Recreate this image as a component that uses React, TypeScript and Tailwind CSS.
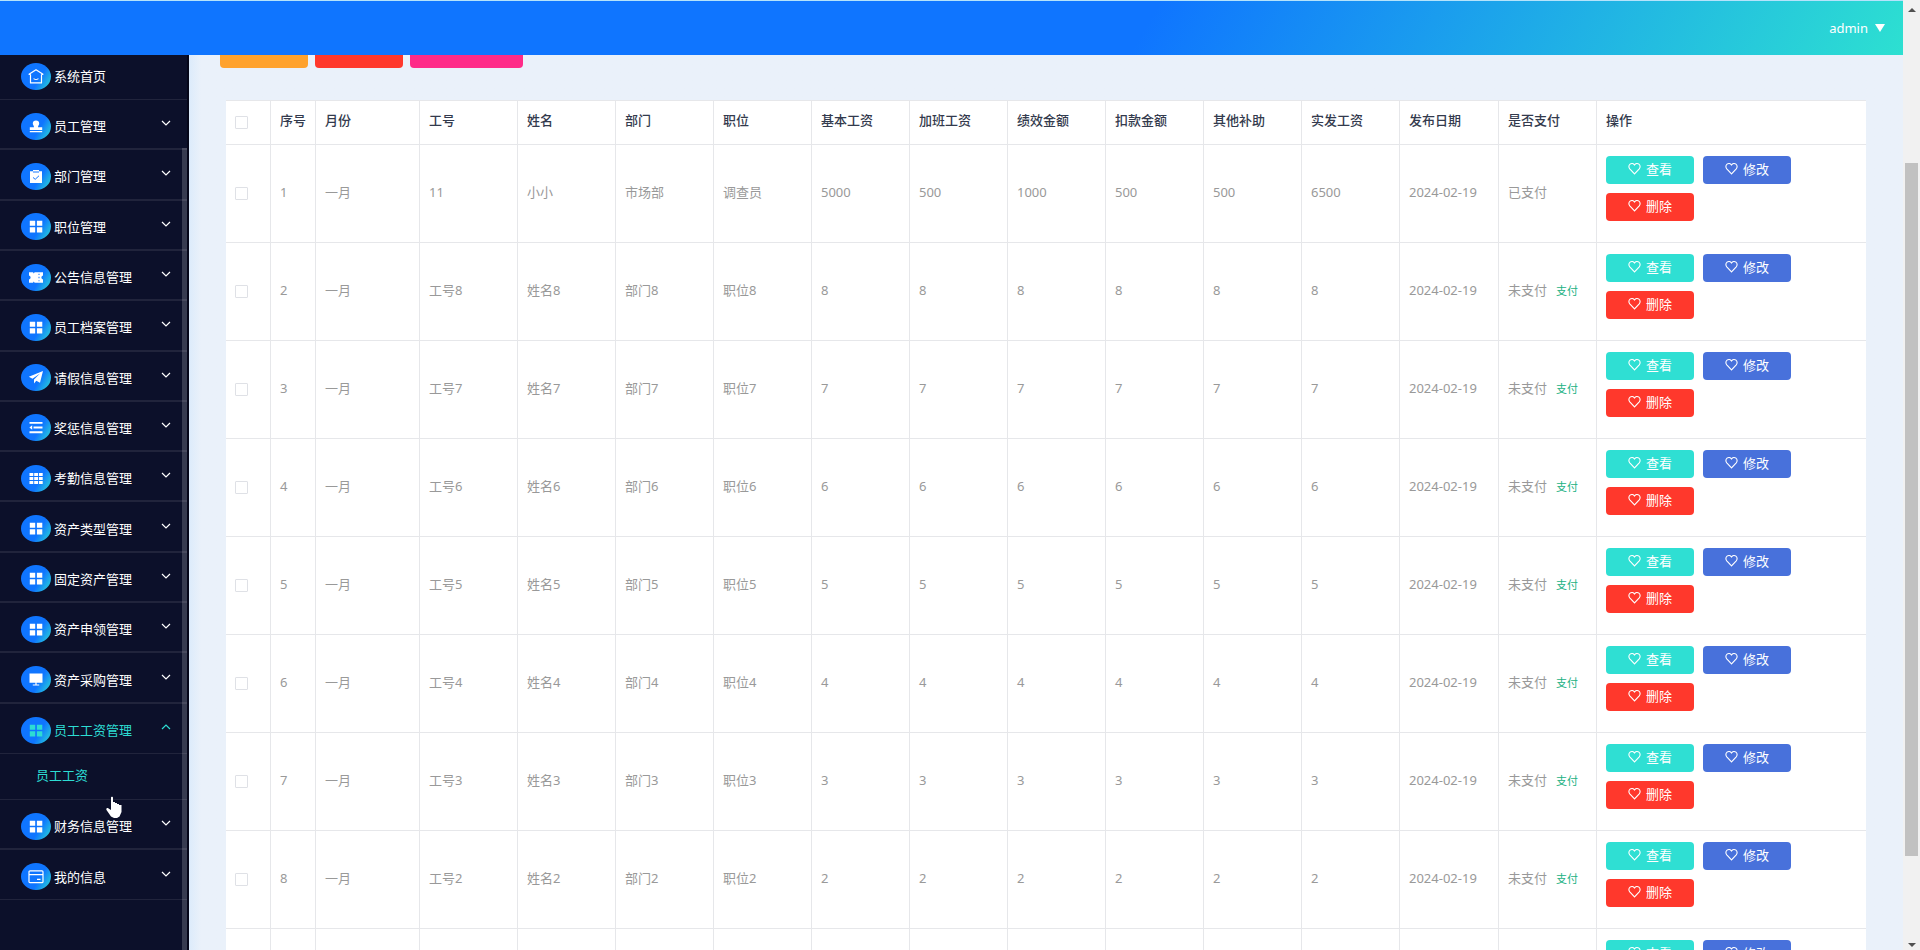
import { useState } from "react";
import type { ReactNode } from "react";

interface MenuItem {
  title: string;
  icon: string;
  open?: boolean;
}

interface Salary {
  month: string;
  no: string;
  name: string;
  dept: string;
  post: string;
  amounts: string[];
  date: string;
  paid: boolean;
}

const mainMenu: MenuItem[] = [
  { title: "员工管理", icon: "user" },
  { title: "部门管理", icon: "claim" },
  { title: "职位管理", icon: "menu" },
  { title: "公告信息管理", icon: "ticket" },
  { title: "员工档案管理", icon: "menu" },
  { title: "请假信息管理", icon: "send" },
  { title: "奖惩信息管理", icon: "unfold" },
  { title: "考勤信息管理", icon: "grid" },
  { title: "资产类型管理", icon: "menu" },
  { title: "固定资产管理", icon: "menu" },
  { title: "资产申领管理", icon: "menu" },
  { title: "资产采购管理", icon: "screen" },
  { title: "员工工资管理", icon: "menu", open: true },
];

const bottomMenu: MenuItem[] = [
  { title: "财务信息管理", icon: "menu" },
  { title: "我的信息", icon: "card" },
];

const headers = [
  "序号", "月份", "工号", "姓名", "部门", "职位", "基本工资", "加班工资", "绩效金额",
  "扣款金额", "其他补助", "实发工资", "发布日期", "是否支付", "操作",
];

const rows: Salary[] = [
  {
    month: "一月",
    no: "11",
    name: "小小",
    dept: "市场部",
    post: "调查员",
    amounts: ["5000", "500", "1000", "500", "500", "6500"],
    date: "2024-02-19",
    paid: true,
  },
  ...[8, 7, 6, 5, 4, 3, 2, 1].map((n) => ({
    month: "一月",
    no: `工号${n}`,
    name: `姓名${n}`,
    dept: `部门${n}`,
    post: `职位${n}`,
    amounts: Array(6).fill(String(n)),
    date: "2024-02-19",
    paid: false,
  })),
];

const shapes: Record<string, ReactNode> = {
  home: (
    <g fill="none" stroke="currentColor" strokeWidth="1.2" strokeLinejoin="round" strokeLinecap="round">
      <path d="M8 .8 15 5.600l-1.500.6v8.600h-11V6.200L1 5.600z" />
      <path d="M6 10.500q2 1.400 4 0" />
    </g>
  ),
  user: <path d="M8 1.500a3.200 3.200 0 0 1 3.200 3.200c0 1.500-1.200 2.300-1.200 4h4.200v3H1.800v-3H6c0-1.700-1.200-2.500-1.200-4A3.200 3.200 0 0 1 8 1.500zM1.800 12.800h12.400V14H1.800z" />,
  claim: (
    <>
      <path d="M2 2.500h3V1h6v1.500h3V15H2z" />
      <path d="M5 3.200h6M5 9l2.200 2 3.800-3.800" fill="none" stroke="#0f75ff" strokeWidth="1" />
    </>
  ),
  menu: <path d="M1.800 1.800h5.400v5.400H1.800zM8.900 1.800h5.400v5.400H8.900zM1.800 8.900h5.400v5.400H1.800zM8.900 8.900h5.400v5.400H8.900z" />,
  ticket: <path d="M1 2.500h4l.8 1.200.8-1.200H15v3.300a2.300 2.300 0 0 0 0 4.400v3.300H6.600l-.8-1.200-.8 1.200H1v-3.300a2.300 2.300 0 0 0 0-4.400zM10.500 4v1.200h1V4zm0 3.300v1.400h1V7.300zm0 3.500V12h1v-1.200z" />,
  send: <path d="M15 1 .8 7.200l3.700 2L12 3.800 6 10.200v4.300l2.300-3 3.700 2z" />,
  unfold: <path d="M1.500 2h13v2h-13zM5.500 7h9v2h-9zM1.500 12h13v2h-13zM4.200 5.600v4.800L1.400 8z" />,
  grid: <path d="M1.500 2h3.800v3.300H1.500zM6.200 2H10v3.300H6.200zM10.900 2h3.800v3.300h-3.800zM1.500 6.300h3.800v3.300H1.500zM6.200 6.300H10v3.300H6.200zM10.900 6.300h3.800v3.300h-3.800zM1.500 10.600h3.800v3.300H1.500zM6.200 10.600H10v3.300H6.200zM10.900 10.600h3.800v3.300h-3.800z" />,
  screen: <path d="M1.500 1.500h13v10h-13zM7.400 11.500h1.200v1.700h2.600v1.200H4.800v-1.200h2.600z" />,
  card: (
    <g fill="none" stroke="currentColor" strokeWidth="1.200">
      <rect x="1" y="2" width="14" height="12.500" rx="1" />
      <path d="M1 6h14M9 11h3.500" />
    </g>
  ),
};

const MenuIcon = ({ name }: { name: string }) => (
  <span className="flex h-[27px] w-[30px] shrink-0 items-center justify-center rounded-[50%] bg-[linear-gradient(120deg,#0f75ff_60%,#2de0d1)]">
    <svg viewBox="0 0 16 16" className="h-[15px] w-4" fill="currentColor" preserveAspectRatio="none">
      {shapes[name]}
    </svg>
  </span>
);

const Arrow = ({ up }: { up?: boolean }) => (
  <svg viewBox="0 0 10 6" className="mb-[6px] ml-auto h-[6px] w-[10px]" fill="none" stroke="currentColor" strokeWidth="1.200">
    <path d={up ? "M1 5l4-4 4 4" : "M1 1l4 4 4-4"} />
  </svg>
);

const MenuRow = ({ item }: { item: MenuItem }) => (
  <li className={item.open ? "border-b border-[#21243c]" : "border-b-2 border-[#21243c] last:border-b"}>
    <button
      type="button"
      aria-expanded={!!item.open}
      className={`flex h-full w-full items-center gap-[3px] pt-1 pr-4 pl-[21px] ${item.open ? "text-[#2ddcd3]" : "text-white"}`}
    >
      <MenuIcon name={item.icon} />
      {item.title}
      <Arrow up={item.open} />
    </button>
  </li>
);

const ActionButton = ({ label, color }: { label: string; color: string }) => (
  <button type="button" className={`flex h-7 w-[88px] items-center justify-center gap-[5px] rounded pb-[3px] text-white ${color}`}>
    <svg viewBox="0 0 14 14" className="h-[13px] w-[13px]" fill="none" stroke="currentColor" strokeWidth="1.200">
      <path d="M7 12.800 1.900 7.400C.5 5.800.7 3.500 2.200 2.300 3.800 1.100 5.900 1.500 7 3.200 8.100 1.500 10.200 1.100 11.800 2.300c1.500 1.200 1.700 3.500.3 5.100z" />
    </svg>
    {label}
  </button>
);

const cell = "border-r border-b border-[#e6e7ea] px-[9px] text-left";

const App: React.FC = () => {
  const [checked, setChecked] = useState<number[]>([]);

  const toggle = (i: number) => {
    setChecked(checked.includes(i) ? checked.filter((c) => c !== i) : [...checked, i]);
  };

  const box = "block h-[13px] w-[13px] appearance-none rounded-[1px] border border-[#dfe1e6] bg-white checked:bg-[#0f75ff]";

  return (
    <div className="flex h-screen overflow-hidden bg-[#eaf1fa] font-['Noto_Sans','Noto_Sans_CJK_SC',sans-serif] text-[13px] leading-5">
      <div className="flex min-w-0 flex-1 flex-col">
        <header className="flex h-[55px] shrink-0 items-center justify-end border-t border-[#b5e3fb] bg-[linear-gradient(120deg,#0f75ff_60%,#2de0d1)] pr-[18px] text-white">
          <button type="button" className="flex items-center gap-[7px]">
            admin
            <svg viewBox="0 0 10 8" className="h-2 w-[10px]" fill="currentColor">
              <path d="M0 0h10L5 8z" />
            </svg>
          </button>
        </header>

        <div className="flex min-h-0 flex-1">
          <aside className="relative w-[189px] shrink-0 border-r-2 border-[#050619] bg-[#0c102a] text-white">
            <nav>
              <a href="#home" className="flex h-[45px] items-center gap-[3px] border-b border-[#21243c] pb-[2px] pl-[21px]">
                <MenuIcon name="home" />
                系统首页
              </a>
              <ul className="grid h-[654px] auto-rows-fr">
                {mainMenu.map((item) => (
                  <MenuRow key={item.title} item={item} />
                ))}
              </ul>
              <a href="#salary" className="flex h-[46px] items-center border-b border-[#21243c] pb-[3px] pl-9 text-[#2ddcd3]">
                员工工资
              </a>
              <ul className="grid h-[100px] auto-rows-fr">
                {bottomMenu.map((item) => (
                  <MenuRow key={item.title} item={item} />
                ))}
              </ul>
            </nav>
            <div className="absolute top-[93px] right-0 bottom-0 w-[5px] bg-white/18" />
            {/* pointer */}
            <svg viewBox="0 0 16 22" className="absolute top-[741px] left-[106px] h-[22px] w-4" fill="white">
              <path d="M5 1.500C5 .5 7 .5 7 1.500V6h2v1h2v1h2v1h2.500v7l-2 4.500L11 22H8l-3-1.500L.5 14c-.8-1.500 1-2.500 2-1.500L5 14z" />
            </svg>
          </aside>

          <main className="min-w-0 flex-1 overflow-hidden bg-linear-to-r from-[#dcebfb] to-[#eaf1fa] to-[12px] pr-[37px] pl-[31px]">
            <div className="flex gap-[7px]">
              <button type="button" aria-label="新增" className="h-[13px] w-[88px] rounded-b bg-[#ffa22d]" />
              <button type="button" aria-label="删除" className="h-[13px] w-[88px] rounded-b bg-[#ff382c]" />
              <button type="button" aria-label="报表" className="h-[13px] w-[113px] rounded-b bg-[#ff2b88]" />
            </div>
            <div className="mt-8 ml-[6px]">
              <table className="w-full table-fixed border-separate border-spacing-0 border-t border-[#e6e7ea] bg-white text-[#999]">
                <colgroup>
                  <col className="w-[45px]" />
                  <col className="w-[45px]" />
                  <col className="w-[104px]" />
                  {headers.slice(2, 14).map((h) => (
                    <col key={h} className={h === "发布日期" ? "w-[99px]" : "w-[98px]"} />
                  ))}
                  <col />
                </colgroup>
                <thead>
                  <tr className="h-11 text-[#333a4d]">
                    <th className={cell}>
                      <input type="checkbox" aria-label="全选" className={box} />
                    </th>
                    {headers.map((h) => (
                      <th key={h} className={`${cell} pb-[6px] font-medium last:border-r-0`}>{h}</th>
                    ))}
                  </tr>
                </thead>
                <tbody>
                  {rows.map((row, i) => (
                    <tr key={row.no} className="h-[98px]">
                      <td className={cell}>
                        <input
                          type="checkbox"
                          aria-label={`选择${i + 1}`}
                          className={box}
                          checked={checked.includes(i)}
                          onChange={() => toggle(i)}
                        />
                      </td>
                      {[String(i + 1), row.month, row.no, row.name, row.dept, row.post, ...row.amounts, row.date].map((text, k) => (
                        <td key={k} className={`${cell} pb-[3px]`}>{text}</td>
                      ))}
                      <td className={`${cell} pb-[3px]`}>
                        {row.paid ? "已支付" : "未支付"}
                        {!row.paid && <button type="button" className="ml-[9px] text-[11px] text-[#22b183]">支付</button>}
                      </td>
                      <td className={`${cell} border-r-0 pt-[11px] align-top`}>
                        <div className="flex w-[200px] flex-wrap gap-[9px]">
                          <ActionButton label="查看" color="bg-[#2fdfd3]" />
                          <ActionButton label="修改" color="bg-[#4871db]" />
                          <ActionButton label="删除" color="bg-[#ff382c]" />
                        </div>
                      </td>
                    </tr>
                  ))}
                </tbody>
              </table>
            </div>
          </main>
        </div>
      </div>

      {/* page scrollbar */}
      <div className="flex w-[17px] shrink-0 flex-col items-center bg-[#f1f1f1] text-[#505050]">
        <svg viewBox="0 0 8 4" className="mt-2 h-1 w-2" fill="currentColor"><path d="M4 0l4 4H0z" /></svg>
        <div className="mt-[151px] w-[13px] flex-1 bg-[#c1c1c1]" />
        <svg viewBox="0 0 8 4" className="mt-[87px] mb-[3px] h-1 w-2" fill="currentColor"><path d="M0 0h8L4 4z" /></svg>
      </div>
    </div>
  );
};

export default App;
